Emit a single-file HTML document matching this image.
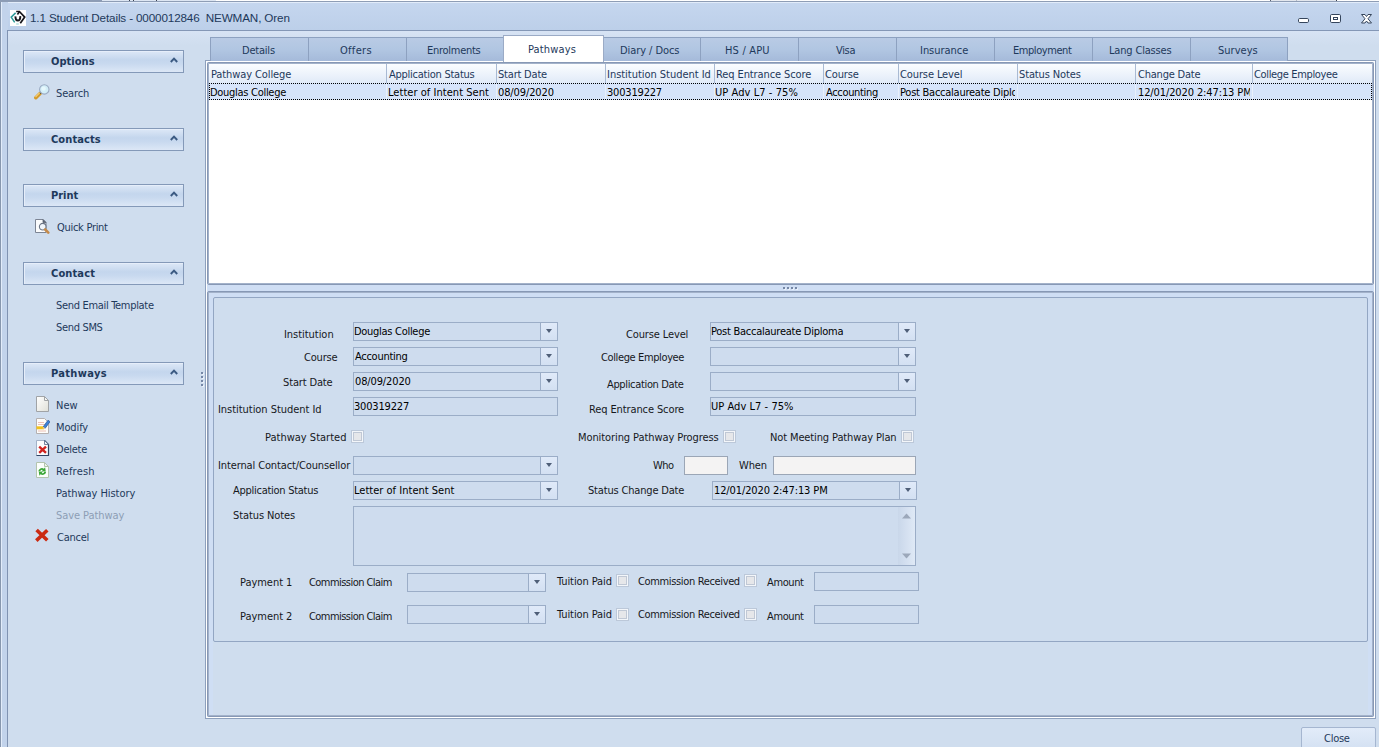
<!DOCTYPE html>
<html>
<head>
<meta charset="utf-8">
<title>1.1 Student Details</title>
<style>
html,body{margin:0;padding:0;}
body{width:1379px;height:747px;overflow:hidden;position:relative;background:#cfddee;
 font-family:"DejaVu Sans Condensed","Liberation Sans",sans-serif;font-size:11px;line-height:13px;color:#1e395b;}
div,span,b,i{box-sizing:border-box;}
.a,.t,.tab,.cb,.combo,.box,.gh{position:absolute;}
.t{white-space:pre;height:13px;z-index:5;}
.k{color:#000;}
.l{color:#16181c;}
.bd{font-weight:bold;}
.dis{color:#8d9db5;}
#titlebar{left:0;top:0;width:1379px;height:31px;background:linear-gradient(#c6d7ef,#bccfe9);}
.tt{font-family:"Liberation Sans",sans-serif;font-size:11.7px;line-height:14px;height:14px;}
#leftframe{left:0;top:0;width:8px;height:747px;background:#c2d3eb;border-left:1px solid #8797ae;}
.gh{left:23px;width:161px;height:23px;border:1px solid #8499b8;background:linear-gradient(#dde8f7 0%,#c4d6ed 42%,#c8d9ef 60%,#dce7f6 100%);box-shadow:inset 1px 1px 0 #e6eefa;}
.gh svg{position:absolute;left:146px;top:6px;}
.ico{position:absolute;left:34px;width:16px;height:16px;}
.tab{top:37px;width:99px;height:24px;border:1px solid #8da1c0;border-bottom:none;background:linear-gradient(#b9cbe5 0%,#b1c6e2 50%,#a5badA 100%);z-index:2;}
.tab.sel{top:35px;height:27px;width:101px;background:#fff;border-color:#9babc6;z-index:3;}
.vs{position:absolute;top:64px;width:1px;height:19px;background:#a9bad3;z-index:3;}
.vr{position:absolute;top:84px;width:1px;height:15px;background:#e8effb;z-index:3;}
.combo,.box{height:19px;border:1px solid #9badc7;background:#cedcee;z-index:4;}
.combo i{position:absolute;right:0;top:0;width:17px;height:17px;border-left:1px solid #9badc7;background:linear-gradient(#e0eaf9,#d3e0f2);}
.combo i:after{content:"";position:absolute;left:5px;top:6px;border:3.5px solid transparent;border-top:4px solid #4f5f78;border-bottom:none;}
.cb{width:13px;height:13px;border:1px solid #bcc8d9;background:#f3f6fa;z-index:4;}
.cb:after{content:"";position:absolute;left:1px;top:1px;width:7px;height:7px;border:1px solid #c0c8d5;background:#e6e7ea;}
.light{background:#f4f3f3;border-color:#9ba6b6;}
</style>
</head>
<body>
<div class="a" style="left:0px;top:0px;width:1379px;height:2px;background:#fff;z-index:9"></div>
<div class="a" style="left:0px;top:0px;width:102px;height:2px;background:#8c9cb6;z-index:9"></div>
<div class="a" style="left:102px;top:0px;width:114px;height:1px;background:#dde6f3;z-index:9"></div>
<div class="a" style="left:1270px;top:0px;width:67px;height:1px;background:#e3e7ee;z-index:9"></div>
<div class="a" style="left:129px;top:0px;width:1px;height:1px;background:#3a4250;z-index:9"></div>
<div class="a" style="left:133px;top:0px;width:1px;height:1px;background:#3a4250;z-index:9"></div>
<div class="a" style="left:156px;top:0px;width:1px;height:1px;background:#3a4250;z-index:9"></div>
<div class="a" style="left:1270px;top:0px;width:1px;height:1px;background:#5a6270;z-index:9"></div>
<div class="a" style="left:1296px;top:0px;width:1px;height:1px;background:#b4bac6;z-index:9"></div>
<div class="a" style="left:1336px;top:0px;width:1px;height:1px;background:#3a4250;z-index:9"></div>
<div class="a" style="left:0px;top:1px;width:1379px;height:1px;background:#8e9db5;z-index:9"></div>
<div id="titlebar" class="a"></div>
<div class="a" style="left:0px;top:2px;width:1379px;height:1px;background:#e2ecfa;"></div>
<div class="a" style="left:8px;top:30px;width:1371px;height:1px;background:#8497b6;"></div>
<div class="a" style="left:8px;top:31px;width:1371px;height:14px;background:linear-gradient(#d7e3f4,#cfddee)"></div>
<div id="leftframe" class="a"></div>
<div class="a" style="left:1px;top:2px;width:1px;height:745px;background:#e2ecfa;"></div>
<div class="a" style="left:7px;top:30px;width:1px;height:717px;background:#8093b2;"></div>
<svg class="a" style="left:10px;top:10px" width="16" height="16" viewBox="0 0 16 16">
 <rect width="16" height="16" fill="#fff"/>
 <path d="M5.600 2.900 L1.200 7.100 L4.700 12.400" fill="none" stroke="#2e9a98" stroke-width="1.500"/>
 <path d="M6.200 14 L8.800 14" fill="none" stroke="#8fd0cf" stroke-width="1"/>
 <path d="M6.200 1.500 L9.400 1.500 L14.700 7.100 L10.300 13.300" fill="none" stroke="#15151a" stroke-width="1.700"/>
 <path d="M9.400 1.800 L7.400 4.400" fill="none" stroke="#15151a" stroke-width="1.600"/>
 <path d="M5.500 6.400 C5.300 9.500 6.500 10.600 7.800 10.600 C9.300 10.600 10.600 9 10.200 6.200" fill="none" stroke="#15151a" stroke-width="2"/>
</svg>
<span class="t tt" style="left:30px;top:11px;letter-spacing:-0.143px">1.1 Student Details - 0000012846  NEWMAN, Oren</span>
<svg class="a" style="left:1296px;top:14px" width="80" height="12" viewBox="0 0 80 12">
 <rect x="2.500" y="4.500" width="10" height="4" rx="1.200" fill="#fff" stroke="#35455c"/>
 <rect x="34.500" y="0.500" width="10" height="8" rx="1.200" fill="#fff" stroke="#35455c"/>
 <rect x="37.500" y="3.500" width="4" height="2" fill="#fff" stroke="#35455c"/>
 <path d="M65.500 .5h3.500l1.500 2 1.500-2h3.500l-3.500 4.250 3.500 4.250h-3.500l-1.500-2-1.500 2h-3.500l3.500-4.250z" fill="#fff" stroke="#35455c"/>
</svg>
<div class="gh" style="top:50px"><svg width="8" height="6" viewBox="0 0 8 6"><path d="M0.800 5 L4 1.600 L7.200 5" fill="none" stroke="#3b5a82" stroke-width="1.900"/></svg></div>
<span class="t bd" style="left:51px;top:55px;letter-spacing:0.036px">Options</span>
<svg class="ico" style="top:84px" viewBox="0 0 16 16"><path d="M1.800 13.800 L6.300 9.200" stroke="#d49a2a" stroke-width="3.400" stroke-linecap="round"/><path d="M1.500 13 L5.800 8.600" stroke="#f4cf78" stroke-width="1.100"/><path d="M6.200 8.200 L7.400 9.400" stroke="#4a3b22" stroke-width="1.600"/><circle cx="10.300" cy="5.400" r="4.700" fill="#d3eef8" stroke="#9aaac2" stroke-width="1.100"/><circle cx="9.600" cy="4.600" r="2.200" fill="#e6f8fc"/></svg>
<span class="t" style="left:56px;top:87px;letter-spacing:-0.135px">Search</span>
<div class="gh" style="top:128px"><svg width="8" height="6" viewBox="0 0 8 6"><path d="M0.800 5 L4 1.600 L7.200 5" fill="none" stroke="#3b5a82" stroke-width="1.900"/></svg></div>
<span class="t bd" style="left:51px;top:133px;letter-spacing:0.090px">Contacts</span>
<div class="gh" style="top:184px"><svg width="8" height="6" viewBox="0 0 8 6"><path d="M0.800 5 L4 1.600 L7.200 5" fill="none" stroke="#3b5a82" stroke-width="1.900"/></svg></div>
<span class="t bd" style="left:51px;top:189px;letter-spacing:-0.010px">Print</span>
<svg class="ico" style="top:218px" viewBox="0 0 16 16"><path d="M1.500 1.500h7.500l3 3v10h-10.500z" fill="#fbfcfd" stroke="#7d8594"/><path d="M9 1.500v3h3z" fill="#5a6372" stroke="#5a6372" stroke-width=".8"/><circle cx="8.700" cy="8.700" r="3.300" fill="#f1f6fb" stroke="#6c7686" stroke-width="1.100"/><path d="M11.200 11.500 L14.300 14.600" stroke="#c58a4a" stroke-width="2.600" stroke-linecap="round"/></svg>
<span class="t" style="left:57px;top:221px;letter-spacing:-0.288px">Quick Print</span>
<div class="gh" style="top:262px"><svg width="8" height="6" viewBox="0 0 8 6"><path d="M0.800 5 L4 1.600 L7.200 5" fill="none" stroke="#3b5a82" stroke-width="1.900"/></svg></div>
<span class="t bd" style="left:51px;top:267px;letter-spacing:0.124px">Contact</span>
<span class="t" style="left:56px;top:299px;letter-spacing:-0.314px">Send Email Template</span>
<span class="t" style="left:56px;top:321px;letter-spacing:-0.325px">Send SMS</span>
<div class="gh" style="top:362px"><svg width="8" height="6" viewBox="0 0 8 6"><path d="M0.800 5 L4 1.600 L7.200 5" fill="none" stroke="#3b5a82" stroke-width="1.900"/></svg></div>
<span class="t bd" style="left:51px;top:367px;letter-spacing:0.332px">Pathways</span>
<svg class="ico" style="top:396px" viewBox="0 0 16 16"><defs><linearGradient id="pg" x1="0" y1="0" x2="1" y2="1"><stop offset="0" stop-color="#ffffff"/><stop offset="1" stop-color="#e0e0d8"/></linearGradient></defs><path d="M2.500 .5h8l4 4v11h-12z" fill="url(#pg)" stroke="#a0a3a6"/><path d="M10.500 .5v4h4z" fill="#f6f6f2" stroke="#a0a3a6"/></svg>
<span class="t" style="left:56px;top:399px;letter-spacing:-0.017px">New</span>
<svg class="ico" style="top:418px" viewBox="0 0 16 16"><path d="M2.500 .5h8l4 4v11h-12z" fill="#fdfcfa" stroke="#b4b0b0"/><path d="M4 4.500h6M4 6.500h7M4 13h8" stroke="#ecc0b4" stroke-width="1"/><path d="M2.500 9.800h7.500" stroke="#f2c21c" stroke-width="3"/><path d="M9.200 8.800 L14 2.200 L16 3.700 L11.200 10.300z" fill="#3c82d8" stroke="#27579c" stroke-width=".7"/><path d="M9.200 8.800l-.7 2.300 2.700-.8z" fill="#e9c98a"/></svg>
<span class="t" style="left:56px;top:421px;letter-spacing:-0.124px">Modify</span>
<svg class="ico" style="top:440px" viewBox="0 0 16 16"><path d="M2.500 .5h8l4 4v11h-12z" fill="#fbfcfe" stroke="#a3b2c8"/><path d="M10.500 .5l4 4v11h-12" fill="none" stroke="#2f4464" stroke-width="1.200"/><path d="M10.500 .5v4h4z" fill="#eef2f8" stroke="#55698a" stroke-width=".8"/><path d="M5.200 6.600l6.800 6.200M12 6.600l-6.800 6.200" stroke="#cf2320" stroke-width="2.400"/></svg>
<span class="t" style="left:56px;top:443px;letter-spacing:-0.246px">Delete</span>
<svg class="ico" style="top:462px" viewBox="0 0 16 16"><path d="M2.500 .5h8l4 4v11h-12z" fill="#fbfefb" stroke="#b3c4ae"/><path d="M10.500 .5v4h4z" fill="#eef4ec" stroke="#b3c4ae"/><path d="M4.300 9.300a3.600 3.600 0 0 1 5.600-2.600l1.200-1.400.6 4-4 .1 1.100-1.300a2 2 0 0 0-2.700 1.300z" fill="#3aa637"/><path d="M12.200 9.700a3.600 3.600 0 0 1-5.600 2.600l-1.200 1.400-.6-4 4-.1-1.100 1.300a2 2 0 0 0 2.700-1.300z" fill="#3aa637"/></svg>
<span class="t" style="left:56px;top:465px;letter-spacing:0.222px">Refresh</span>
<span class="t" style="left:56px;top:487px;letter-spacing:-0.057px">Pathway History</span>
<span class="t dis" style="left:56px;top:509px;letter-spacing:-0.063px">Save Pathway</span>
<svg class="ico" style="top:528px" viewBox="0 0 16 16"><path d="M2.600 2 L13.300 12.300 M13.300 2.300 L2.300 12.600" stroke="#cb2a12" stroke-width="3.600" stroke-linecap="butt"/></svg>
<span class="t" style="left:57px;top:531px;letter-spacing:-0.251px">Cancel</span>
<div class="a" style="left:201px;top:372px;width:2px;height:2px;background:#7587a6;box-shadow:1px 1px 0 #e9f0fa"></div>
<div class="a" style="left:201px;top:376px;width:2px;height:2px;background:#7587a6;box-shadow:1px 1px 0 #e9f0fa"></div>
<div class="a" style="left:201px;top:380px;width:2px;height:2px;background:#7587a6;box-shadow:1px 1px 0 #e9f0fa"></div>
<div class="a" style="left:201px;top:384px;width:2px;height:2px;background:#7587a6;box-shadow:1px 1px 0 #e9f0fa"></div>
<div class="tab" style="left:210px;width:99px"></div>
<span class="t" style="left:242px;top:44px;letter-spacing:-0.213px">Details</span>
<div class="tab" style="left:308px;width:99px"></div>
<span class="t" style="left:340px;top:44px;letter-spacing:0.300px">Offers</span>
<div class="tab" style="left:406px;width:99px"></div>
<span class="t" style="left:427px;top:44px;letter-spacing:-0.278px">Enrolments</span>
<div class="tab sel" style="left:503px"></div>
<span class="t" style="left:528px;top:43px;letter-spacing:0.141px">Pathways</span>
<div class="tab" style="left:602px;width:99px"></div>
<span class="t" style="left:620px;top:44px;letter-spacing:-0.071px">Diary / Docs</span>
<div class="tab" style="left:700px;width:99px"></div>
<span class="t" style="left:725px;top:44px;letter-spacing:0.179px">HS / APU</span>
<div class="tab" style="left:798px;width:99px"></div>
<span class="t" style="left:836px;top:44px;letter-spacing:-0.350px">Visa</span>
<div class="tab" style="left:896px;width:99px"></div>
<span class="t" style="left:920px;top:44px;letter-spacing:-0.038px">Insurance</span>
<div class="tab" style="left:994px;width:99px"></div>
<span class="t" style="left:1013px;top:44px;letter-spacing:-0.439px">Employment</span>
<div class="tab" style="left:1092px;width:99px"></div>
<span class="t" style="left:1109px;top:44px;letter-spacing:-0.177px">Lang Classes</span>
<div class="tab" style="left:1190px;width:98px"></div>
<span class="t" style="left:1218px;top:44px;letter-spacing:0.025px">Surveys</span>
<div class="a" style="left:205px;top:60px;width:1171px;height:659px;border:1px solid #8da0bd;background:#cfdef4;z-index:1"></div>
<div class="a" style="left:206px;top:61px;width:1169px;height:657px;border:1px solid #fff;z-index:1"></div>
<div class="a" style="left:207px;top:62px;width:1167px;height:223px;border:1px solid #8798b5;border-radius:2px;box-shadow:inset 0 0 0 1px #a3b2ca;background:#fff;z-index:2"></div>
<div class="a" style="left:209px;top:64px;width:1163px;height:19px;background:linear-gradient(#fbfdff,#e0eaf8);z-index:2"></div>
<div class="a" style="left:209px;top:83px;width:1163px;height:17px;background:#d6e4fa;border:1px dotted #000;z-index:2"></div>
<span class="t" style="left:211px;top:68px;letter-spacing:-0.101px">Pathway College</span>
<span class="t k" style="left:210px;top:86px;letter-spacing:-0.288px;width:174px;overflow:hidden">Douglas College</span>
<div class="vs" style="left:386px"></div><div class="vr" style="left:386px"></div>
<span class="t" style="left:389px;top:68px;letter-spacing:-0.251px">Application Status</span>
<span class="t k" style="left:388px;top:86px;letter-spacing:0.038px;width:106px;overflow:hidden">Letter of Intent Sent</span>
<div class="vs" style="left:496px"></div><div class="vr" style="left:496px"></div>
<span class="t" style="left:498px;top:68px;letter-spacing:-0.198px">Start Date</span>
<span class="t k" style="left:498px;top:86px;letter-spacing:-0.111px;width:105px;overflow:hidden">08/09/2020</span>
<div class="vs" style="left:605px"></div><div class="vr" style="left:605px"></div>
<span class="t" style="left:607px;top:68px;letter-spacing:-0.030px">Institution Student Id</span>
<span class="t k" style="left:607px;top:86px;letter-spacing:-0.188px;width:105px;overflow:hidden">300319227</span>
<div class="vs" style="left:714px"></div><div class="vr" style="left:714px"></div>
<span class="t" style="left:716px;top:68px;letter-spacing:-0.099px">Req Entrance Score</span>
<span class="t k" style="left:715px;top:86px;letter-spacing:0.068px;width:106px;overflow:hidden">UP Adv L7 - 75%</span>
<div class="vs" style="left:823px"></div><div class="vr" style="left:823px"></div>
<span class="t" style="left:825px;top:68px;letter-spacing:-0.138px">Course</span>
<span class="t k" style="left:826px;top:86px;letter-spacing:-0.341px;width:70px;overflow:hidden">Accounting</span>
<div class="vs" style="left:898px"></div><div class="vr" style="left:898px"></div>
<span class="t" style="left:900px;top:68px;letter-spacing:-0.114px">Course Level</span>
<span class="t k" style="left:900px;top:86px;letter-spacing:-0.251px;width:115px;overflow:hidden">Post Baccalaureate Diploma</span>
<div class="vs" style="left:1017px"></div><div class="vr" style="left:1017px"></div>
<span class="t" style="left:1019px;top:68px;letter-spacing:-0.123px">Status Notes</span>
<div class="vs" style="left:1135px"></div><div class="vr" style="left:1135px"></div>
<span class="t" style="left:1138px;top:68px;letter-spacing:-0.219px">Change Date</span>
<span class="t k" style="left:1138px;top:86px;letter-spacing:-0.112px;width:112px;overflow:hidden">12/01/2020 2:47:13 PM</span>
<div class="vs" style="left:1252px"></div><div class="vr" style="left:1252px"></div>
<span class="t" style="left:1254px;top:68px;letter-spacing:-0.352px">College Employee</span>
<div class="a" style="left:783px;top:287px;width:2px;height:2px;background:#7587a6;z-index:3;box-shadow:1px 1px 0 #e9f0fa"></div>
<div class="a" style="left:787px;top:287px;width:2px;height:2px;background:#7587a6;z-index:3;box-shadow:1px 1px 0 #e9f0fa"></div>
<div class="a" style="left:791px;top:287px;width:2px;height:2px;background:#7587a6;z-index:3;box-shadow:1px 1px 0 #e9f0fa"></div>
<div class="a" style="left:795px;top:287px;width:2px;height:2px;background:#7587a6;z-index:3;box-shadow:1px 1px 0 #e9f0fa"></div>
<div class="a" style="left:207px;top:291px;width:1167px;height:426px;border:1px solid #8798b5;border-radius:2px;box-shadow:inset 0 0 0 1px #a3b2ca;background:#cfdef4;z-index:2"></div>
<div class="a" style="left:213px;top:640px;width:1155px;height:75px;background:#cfddee;z-index:2"></div>
<div class="a" style="left:213px;top:297px;width:1155px;height:345px;border:1px solid #93a6c3;border-radius:2px;background:#cfddee;z-index:2"></div>
<span class="t l" style="left:284px;top:328px;letter-spacing:-0.043px">Institution</span>
<div class="combo" style="left:353px;top:322px;width:205px"><i></i></div>
<span class="t k" style="left:354px;top:325px;letter-spacing:-0.288px">Douglas College</span>
<span class="t l" style="left:304px;top:351px;letter-spacing:-0.188px">Course</span>
<div class="combo" style="left:353px;top:347px;width:205px"><i></i></div>
<span class="t k" style="left:355px;top:350px;letter-spacing:-0.280px">Accounting</span>
<span class="t l" style="left:283px;top:376px;letter-spacing:-0.143px">Start Date</span>
<div class="combo" style="left:353px;top:372px;width:205px"><i></i></div>
<span class="t k" style="left:355px;top:375px;letter-spacing:-0.133px">08/09/2020</span>
<span class="t l" style="left:218px;top:403px;letter-spacing:-0.044px">Institution Student Id</span>
<div class="box " style="left:353px;top:397px;width:205px;height:19px"></div>
<span class="t k" style="left:354px;top:400px;letter-spacing:-0.182px">300319227</span>
<span class="t l" style="left:265px;top:431px;letter-spacing:0.003px">Pathway Started</span>
<div class="cb" style="left:351px;top:430px"></div>
<span class="t l" style="left:218px;top:459px;letter-spacing:-0.125px">Internal Contact/Counsellor</span>
<div class="combo" style="left:353px;top:456px;width:205px"><i></i></div>
<span class="t l" style="left:233px;top:484px;letter-spacing:-0.275px">Application Status</span>
<div class="combo" style="left:353px;top:481px;width:205px"><i></i></div>
<span class="t k" style="left:354px;top:484px;letter-spacing:0.013px">Letter of Intent Sent</span>
<span class="t l" style="left:233px;top:509px;letter-spacing:-0.091px">Status Notes</span>
<span class="t l" style="left:626px;top:328px;letter-spacing:-0.132px">Course Level</span>
<div class="combo" style="left:710px;top:322px;width:206px"><i></i></div>
<span class="t k" style="left:711px;top:325px;letter-spacing:-0.259px">Post Baccalaureate Diploma</span>
<span class="t l" style="left:601px;top:351px;letter-spacing:-0.378px">College Employee</span>
<div class="combo" style="left:710px;top:347px;width:206px"><i></i></div>
<span class="t l" style="left:607px;top:378px;letter-spacing:-0.343px">Application Date</span>
<div class="combo" style="left:710px;top:372px;width:206px"><i></i></div>
<span class="t l" style="left:589px;top:403px;letter-spacing:-0.111px">Req Entrance Score</span>
<div class="box " style="left:710px;top:397px;width:206px;height:19px"></div>
<span class="t k" style="left:711px;top:400px;letter-spacing:0.043px">UP Adv L7 - 75%</span>
<span class="t l" style="left:578px;top:431px;letter-spacing:-0.090px">Monitoring Pathway Progress</span>
<div class="cb" style="left:723px;top:430px"></div>
<span class="t l" style="left:770px;top:431px;letter-spacing:-0.123px">Not Meeting Pathway Plan</span>
<div class="cb" style="left:901px;top:430px"></div>
<span class="t l" style="left:653px;top:459px;letter-spacing:-0.494px">Who</span>
<div class="box light" style="left:684px;top:456px;width:44px;height:19px"></div>
<span class="t l" style="left:739px;top:459px;letter-spacing:-0.114px">When</span>
<div class="box light" style="left:773px;top:456px;width:143px;height:19px"></div>
<span class="t l" style="left:588px;top:484px;letter-spacing:-0.174px">Status Change Date</span>
<div class="combo" style="left:712px;top:481px;width:205px"><i></i></div>
<span class="t k" style="left:714px;top:484px;letter-spacing:-0.112px">12/01/2020 2:47:13 PM</span>
<div class="box" style="left:353px;top:506px;width:563px;height:60px"></div>
<div class="a" style="left:898px;top:507px;width:17px;height:58px;background:linear-gradient(90deg,#c9d7ea,#dfe9f6);z-index:4"></div>
<svg class="a" style="left:901px;top:512px;z-index:4" width="11" height="48" viewBox="0 0 11 48"><path d="M1 6.500 L5.500 1.500 L10 6.500z" fill="#9ca8ba"/><path d="M1 41.500 L5.500 46.500 L10 41.500z" fill="#9ca8ba"/></svg>
<span class="t l" style="left:240px;top:576px;letter-spacing:-0.043px">Payment 1</span>
<span class="t l" style="left:309px;top:576px;letter-spacing:-0.549px">Commission Claim</span>
<div class="combo" style="left:407px;top:573px;width:139px"><i></i></div>
<span class="t l" style="left:557px;top:575px;letter-spacing:-0.096px">Tuition Paid</span>
<div class="cb" style="left:616px;top:574px"></div>
<span class="t l" style="left:638px;top:575px;letter-spacing:-0.353px">Commission Received</span>
<div class="cb" style="left:744px;top:574px"></div>
<span class="t l" style="left:767px;top:576px;letter-spacing:-0.391px">Amount</span>
<div class="box " style="left:814px;top:572px;width:105px;height:19px"></div>
<span class="t l" style="left:240px;top:610px;letter-spacing:-0.039px">Payment 2</span>
<span class="t l" style="left:309px;top:610px;letter-spacing:-0.549px">Commission Claim</span>
<div class="combo" style="left:407px;top:605px;width:139px"><i></i></div>
<span class="t l" style="left:557px;top:608px;letter-spacing:-0.096px">Tuition Paid</span>
<div class="cb" style="left:616px;top:608px"></div>
<span class="t l" style="left:638px;top:608px;letter-spacing:-0.353px">Commission Received</span>
<div class="cb" style="left:744px;top:608px"></div>
<span class="t l" style="left:767px;top:610px;letter-spacing:-0.391px">Amount</span>
<div class="box " style="left:814px;top:605px;width:105px;height:19px"></div>
<div class="a" style="left:1301px;top:727px;width:75px;height:24px;border:1px solid #a5b6d0;border-radius:2px;background:linear-gradient(#e2ecf9,#d3e0f2)"></div>
<span class="t" style="left:1324px;top:732px;letter-spacing:-0.263px">Close</span>
</body>
</html>
